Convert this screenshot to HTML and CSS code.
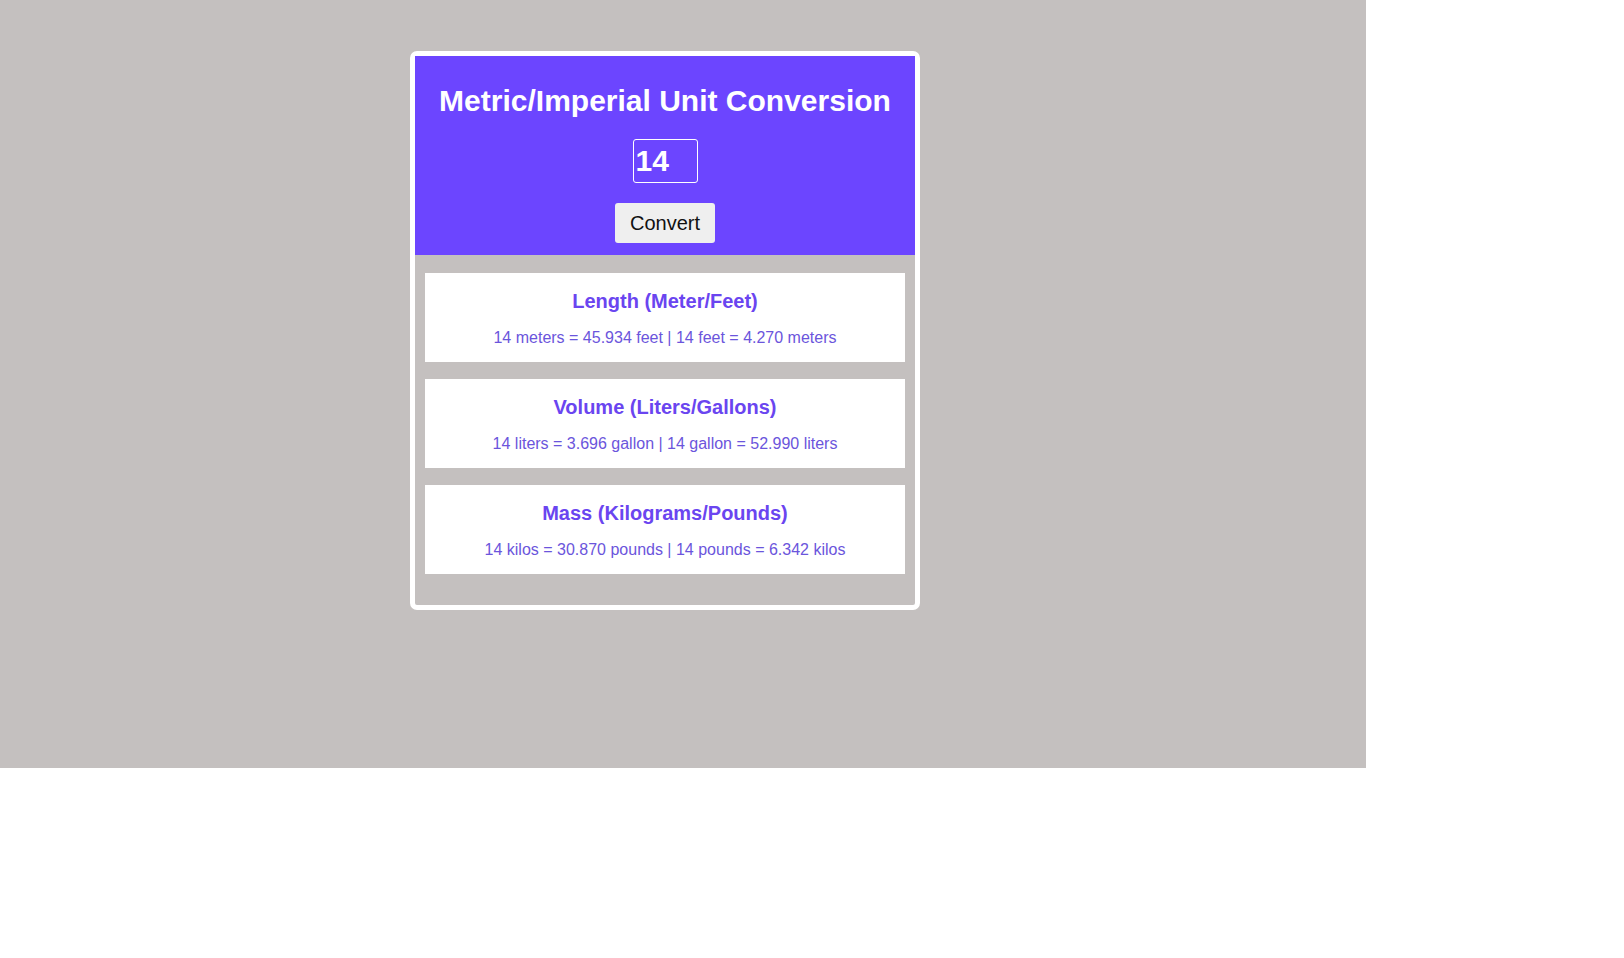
FILE: index.html
```html
<!DOCTYPE html>
<html>
<head>
<meta charset="utf-8">
<title>Unit Conversion</title>
<link rel="stylesheet" href="styles.css">
</head>
<body>
<div class="screen">
  <div class="converter">
    <header class="top">
      <h1 class="title">Metric/Imperial Unit Conversion</h1>
      <input class="value" type="text" value="14">
      <button class="convert">Convert</button>
    </header>
    <main class="results">
      <section class="result">
        <h2 class="result-title">Length (Meter/Feet)</h2>
        <p class="result-text">14 meters = 45.934 feet | 14 feet = 4.270 meters</p>
      </section>
      <section class="result">
        <h2 class="result-title">Volume (Liters/Gallons)</h2>
        <p class="result-text">14 liters = 3.696 gallon | 14 gallon = 52.990 liters</p>
      </section>
      <section class="result">
        <h2 class="result-title">Mass (Kilograms/Pounds)</h2>
        <p class="result-text">14 kilos = 30.870 pounds | 14 pounds = 6.342 kilos</p>
      </section>
    </main>
  </div>
</div>
</body>
</html>
```

FILE: styles.css
```css
html, body {
  margin: 0;
  padding: 0;
  background: #ffffff;
}
body {
  font-family: "Liberation Sans", Arial, sans-serif;
}
.screen {
  width: 1366px;
  height: 768px;
  background: #c4c0bf;
  padding-top: 51px;
  box-sizing: border-box;
}
.converter {
  width: 500px;
  margin-left: 410px;
  border: 5px solid #ffffff;
  border-radius: 7px;
  background: #c4c0bf;
}
.top {
  background: #6c45ff;
  display: flex;
  flex-direction: column;
  align-items: center;
  padding: 27px 0 12px;
}
.title {
  margin: 0;
  color: #ffffff;
  font-size: 30px;
  font-weight: bold;
  line-height: 35px;
}
.value {
  margin-top: 21px;
  width: 65px;
  height: 44px;
  box-sizing: border-box;
  background: transparent;
  border: 1px solid #ffffff;
  border-radius: 3px;
  color: #ffffff;
  font-family: "Liberation Sans", Arial, sans-serif;
  font-size: 30px;
  font-weight: bold;
  padding: 0 2px;
  outline: none;
}
.convert {
  margin-top: 20px;
  width: 100px;
  height: 40px;
  background: #efefef;
  border: none;
  border-radius: 3px;
  color: #111111;
  font-family: "Liberation Sans", Arial, sans-serif;
  font-size: 20px;
}
.results {
  display: flex;
  flex-direction: column;
  gap: 17px;
  padding: 18px 10px 31px;
}
.result {
  background: #ffffff;
  text-align: center;
  padding: 17px 10px 15px;
}
.result-title {
  margin: 0 0 16px;
  color: #6a45f0;
  font-size: 20px;
  line-height: 23px;
  font-weight: bold;
}
.result-text {
  margin: 0;
  color: #6b55dc;
  font-size: 16px;
  line-height: 18px;
}
```
